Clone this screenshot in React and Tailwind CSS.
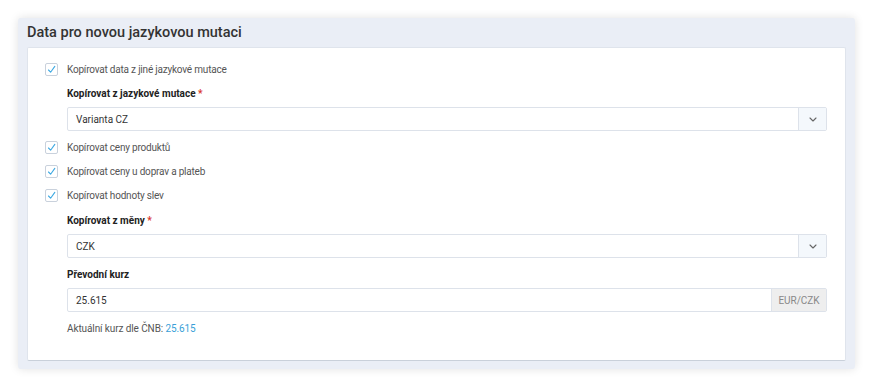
const Check = () => (
  <span className="flex h-[13px] w-[13px] shrink-0 items-center justify-center rounded-[2px] border border-[#c9d1dc] bg-white">
    <svg width="9" height="9" viewBox="0 0 9 9" fill="none">
      <path d="M1.5 5 L3.6 7.2 L7.8 1.4" stroke="#3ea9e2" strokeWidth="1.1" strokeLinecap="round" strokeLinejoin="round" />
    </svg>
  </span>
);

const CheckRow = ({ label }) => (
  <label className="flex h-[24px] items-center gap-[9px] text-[10px] tracking-[-0.2px] text-[#555]">
    <Check />
    <span>{label}</span>
  </label>
);

const Label = ({ children, required }) => (
  <div className="mb-[6px] text-[10px] font-bold text-[#222]">
    {children}
    {required && <span className="text-[#d9342b]"> *</span>}
  </div>
);

const Select = ({ value }) => (
  <div className="flex h-[24px] rounded-[2px] border border-[#dde2ea] bg-white">
    <div className="flex flex-1 items-center px-[8px] text-[10px] text-[#333]">{value}</div>
    <div className="flex w-[28px] items-center justify-center border-l border-[#dde2ea] bg-[#f4f8fc]">
      <svg width="8" height="5" viewBox="0 0 8 5" fill="none">
        <path d="M1 1 L4 4 L7 1" stroke="#666" strokeWidth="1.1" strokeLinecap="round" strokeLinejoin="round" />
      </svg>
    </div>
  </div>
);

export default function App() {
  return (
    <div className="min-h-[387px] bg-white pl-[18px] pr-[15px] pt-[18px] font-['Roboto',sans-serif]">
      <div className="rounded-[3px] bg-[#eaeef6] px-[9px] pb-[8px] shadow-[0_0_10px_rgba(0,0,0,0.12)]">
        <h2 className="flex h-[29px] items-center text-[14.5px] font-medium text-[#333]">
          Data pro novou jazykovou mutaci
        </h2>
        <div className="rounded-[2px] border border-[#dfe4ec] border-b-[#c9d0da] bg-white pl-[17px] pr-[18px] pt-[9px] pb-[24px]">
          <CheckRow label="Kopírovat data z jiné jazykové mutace" />
          <div className="pl-[22px] pt-[5px]">
            <Label required>Kopírovat z jazykové mutace</Label>
            <Select value="Varianta CZ" />
          </div>
          <div className="pt-[4px]">
            <CheckRow label="Kopírovat ceny produktů" />
            <CheckRow label="Kopírovat ceny u doprav a plateb" />
            <CheckRow label="Kopírovat hodnoty slev" />
          </div>
          <div className="pl-[22px] pt-[6px]">
            <Label required>Kopírovat z měny</Label>
            <Select value="CZK" />
            <div className="pt-[9px]">
              <Label>Převodní kurz</Label>
              <div className="flex h-[24px] rounded-[2px] border border-[#dde2ea] bg-white">
                <div className="flex flex-1 items-center px-[8px] text-[10px] text-[#333]">25.615</div>
                <div className="flex w-[55px] items-center justify-center border-l border-[#dde2ea] bg-[#eeeeee] text-[10px] text-[#888]">
                  EUR/CZK
                </div>
              </div>
            </div>
            <div className="pt-[9px] text-[10px] tracking-[-0.1px] text-[#555]">
              Aktuální kurz dle ČNB: <span className="text-[#3a9fd8]">25.615</span>
            </div>
          </div>
        </div>
      </div>
    </div>
  );
}
